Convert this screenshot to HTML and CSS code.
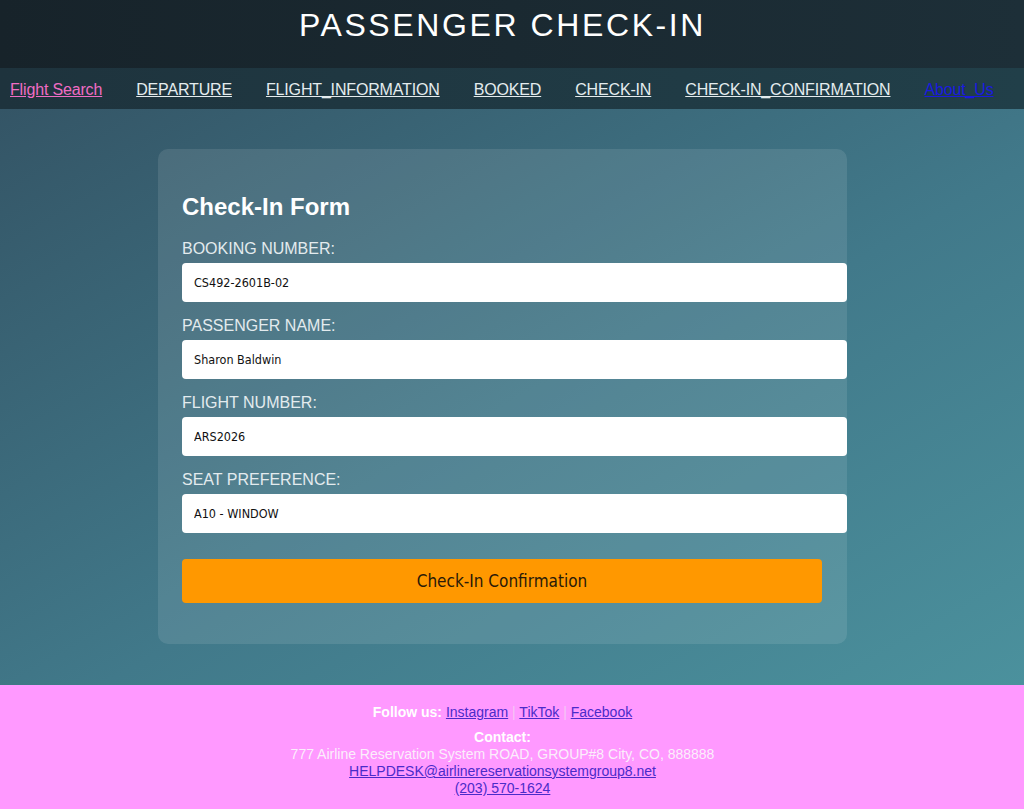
FILE: index.html
```html
<!DOCTYPE html>
<html lang="en">
<head>
<meta charset="utf-8">
<title>Passenger Check-In</title>
<link rel="stylesheet" href="styles.css">
</head>
<body>
<header class="top">
  <h1 class="title">PASSENGER CHECK-IN</h1>
</header>
<nav class="nav">
  <a class="nav-link nav-link--active" href="#">Flight Search</a>
  <a class="nav-link" href="#">DEPARTURE</a>
  <a class="nav-link" href="#">FLIGHT_INFORMATION</a>
  <a class="nav-link" href="#">BOOKED</a>
  <a class="nav-link" href="#">CHECK-IN</a>
  <a class="nav-link" href="#">CHECK-IN_CONFIRMATION</a>
  <a class="nav-link nav-link--plain" href="#">About_Us</a>
</nav>
<main class="main">
  <form class="card">
    <h2 class="card-title">Check-In Form</h2>
    <label class="field-label" for="booking">BOOKING NUMBER:</label>
    <input class="field-input" id="booking" type="text" value="CS492-2601B-02">
    <label class="field-label" for="name">PASSENGER NAME:</label>
    <input class="field-input" id="name" type="text" value="Sharon Baldwin">
    <label class="field-label" for="flight">FLIGHT NUMBER:</label>
    <input class="field-input" id="flight" type="text" value="ARS2026">
    <label class="field-label" for="seat">SEAT PREFERENCE:</label>
    <input class="field-input" id="seat" type="text" value="A10 - WINDOW">
    <button class="submit" type="button">Check-In Confirmation</button>
  </form>
</main>
<footer class="footer">
  <p class="follow"><strong>Follow us:</strong> <a href="#">Instagram</a> <span class="sep">|</span> <a href="#">TikTok</a> <span class="sep">|</span> <a href="#">Facebook</a></p>
  <div class="contact">
    <strong>Contact:</strong><br>
    777 Airline Reservation System ROAD, GROUP#8 City, CO, 888888<br>
    <a href="#">HELPDESK@airlinereservationsystemgroup8.net</a><br>
    <a href="#">(203) 570-1624</a>
  </div>
</footer>
</body>
</html>
```

FILE: styles.css
```css
html, body {
  margin: 0;
  padding: 0;
}
body {
  font-family: "Liberation Sans", Arial, sans-serif;
  background: #3f6f80;
}
.top {
  height: 68px;
  box-sizing: border-box;
  padding: 7px 19px 0 0;
  background: linear-gradient(to right, #17232a, #1d2f38);
  text-align: center;
}
.title {
  margin: 0;
  font-size: 32px;
  font-weight: normal;
  letter-spacing: 2.6px;
  color: #ffffff;
  line-height: 37px;
}
.nav {
  height: 41px;
  box-sizing: border-box;
  display: flex;
  align-items: center;
  gap: 34px;
  padding: 2px 10px 0;
  background: linear-gradient(to right, #1e333d, #213f49);
}
.nav-link {
  font-size: 16px;
  letter-spacing: -0.16px;
  color: #e4ecee;
  text-decoration: underline;
}
.nav-link--active {
  color: #f06cc4;
}
.nav-link--plain {
  color: #1a1adf;
}
.main {
  height: 576px;
  box-sizing: border-box;
  padding-top: 40px;
  background: linear-gradient(to bottom right, #345566, #41798a 55%, #4b919d);
}
.card {
  width: 689px;
  height: 495px;
  box-sizing: border-box;
  margin: 0 0 0 158px;
  padding: 24px;
  background: rgba(255, 255, 255, 0.1);
  border-radius: 10px;
  display: flex;
  flex-direction: column;
}
.card-title {
  margin: 20px 0 19px;
  font-size: 24px;
  font-weight: bold;
  color: #ffffff;
}
.field-label {
  display: block;
  font-size: 16px;
  color: #e3ebee;
  margin-bottom: 5px;
  line-height: 18px;
}
.field-input {
  width: 665px;
  height: 39px;
  box-sizing: border-box;
  margin: 0 0 15px;
  padding: 0 12px;
  border: none;
  border-radius: 4px;
  background: #ffffff;
  font-family: "DejaVu Sans Condensed", "DejaVu Sans", sans-serif;
  font-size: 12.5px;
  color: #111111;
}
.submit {
  margin-top: 11px;
  width: 640px;
  height: 44px;
  border: none;
  border-radius: 4px;
  background: #ff9800;
  color: #2a1a08;
  font-family: "DejaVu Sans Condensed", "DejaVu Sans", sans-serif;
  font-size: 17px;
}
.footer {
  height: 124px;
  box-sizing: border-box;
  padding: 19px 19px 0 0;
  background: #ff99ff;
  text-align: center;
  font-size: 14px;
  color: #fbeefb;
}
.footer a {
  color: #4b2bc9;
}
.follow {
  margin: 0 0 9px;
  line-height: 16px;
}
.follow strong, .contact strong {
  color: #ffffff;
}
.sep {
  color: #f4c6f4;
}
.contact {
  line-height: 17px;
}
```
